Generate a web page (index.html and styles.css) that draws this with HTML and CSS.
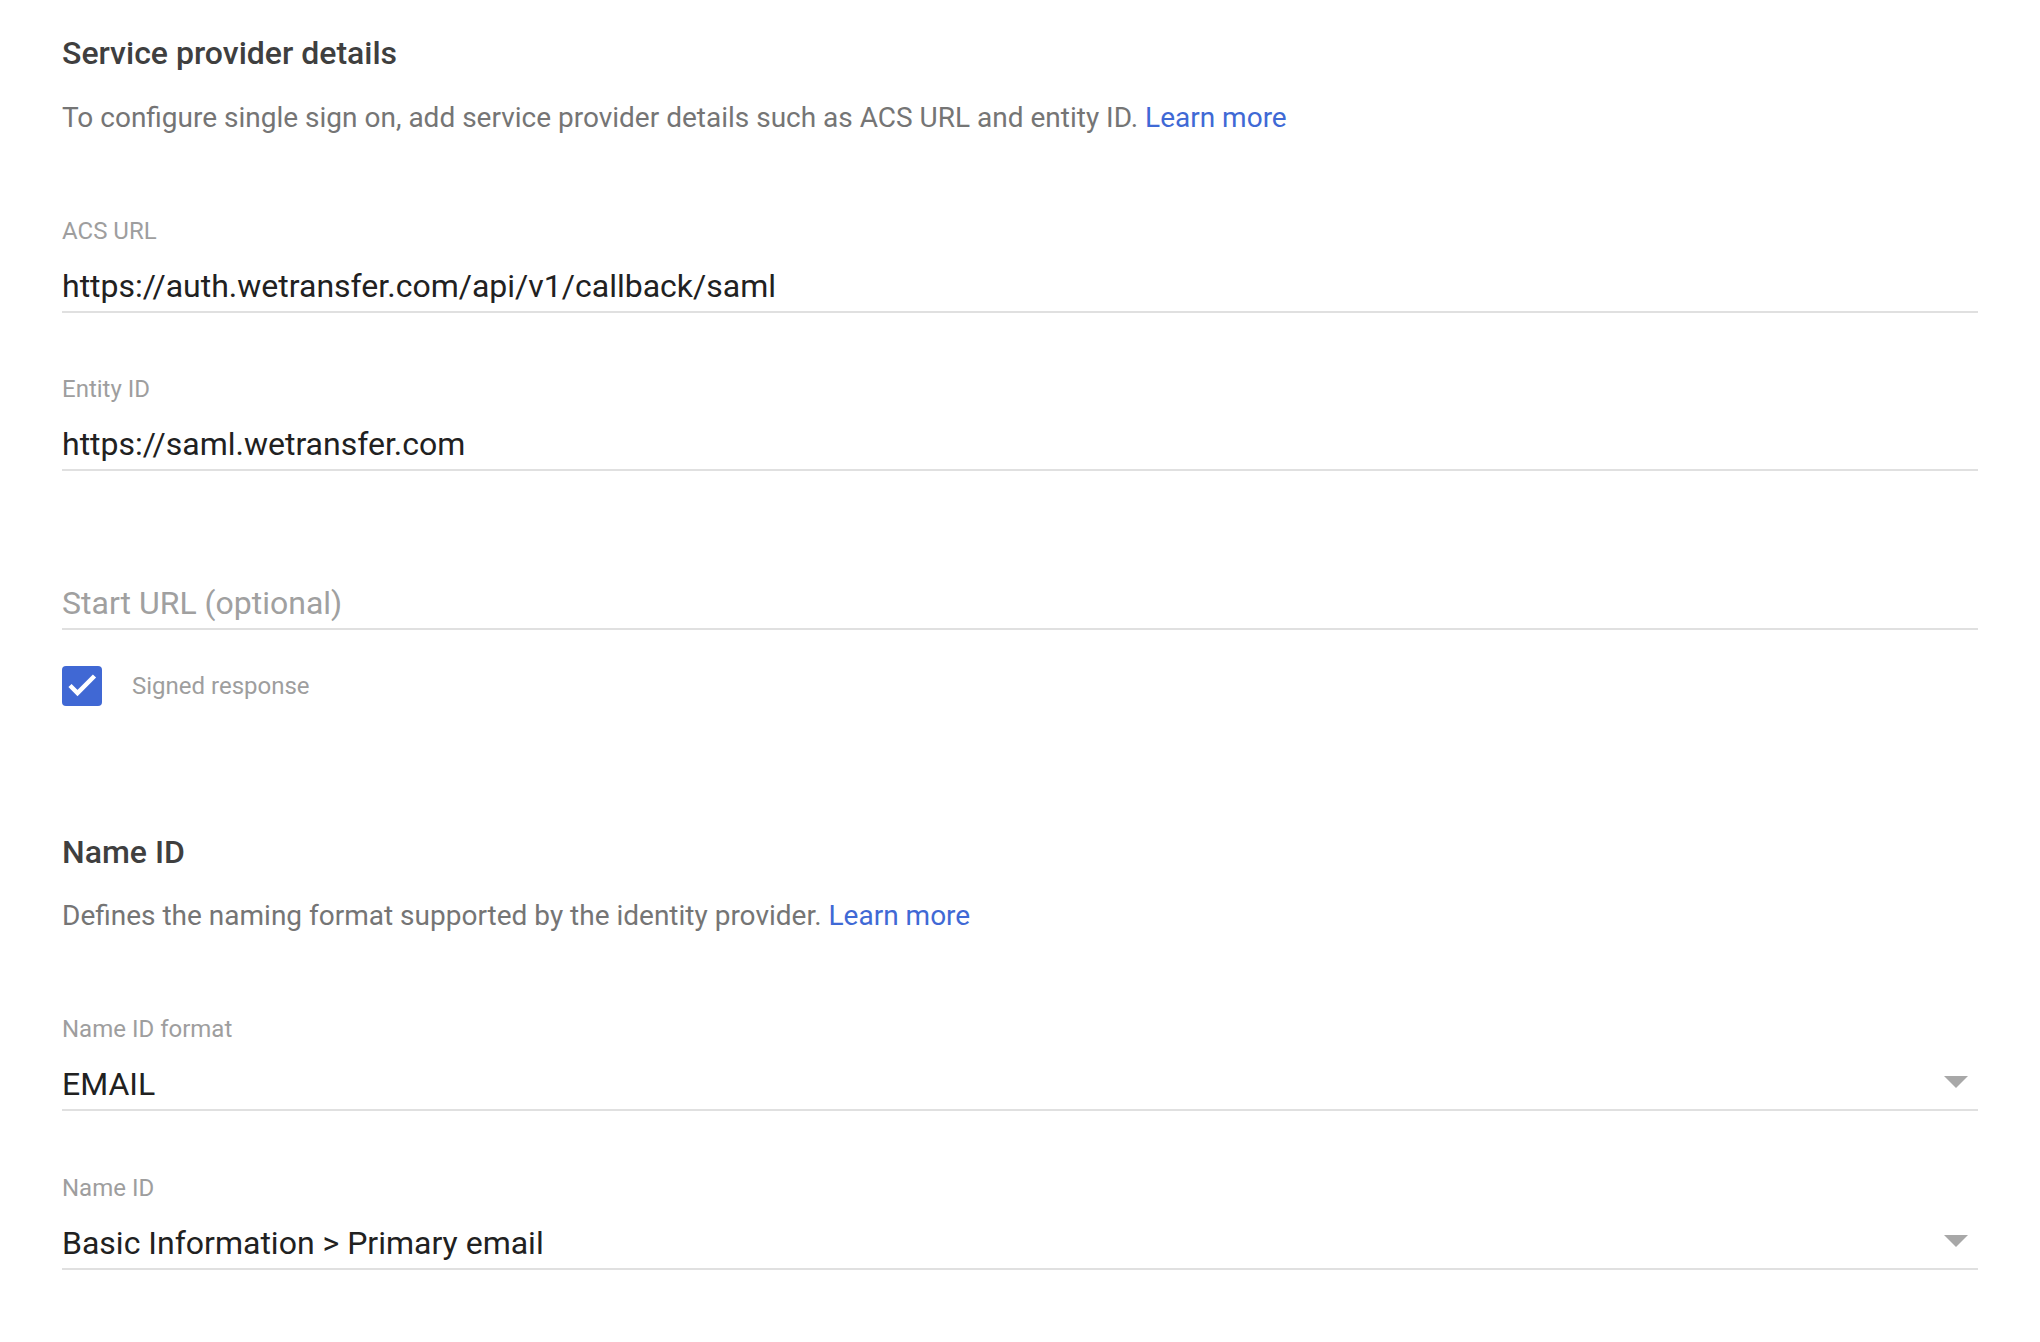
FILE: index.html
```html
<!DOCTYPE html>
<html lang="en">
<head>
<meta charset="utf-8">
<title>Service provider details</title>
<link rel="stylesheet" href="styles.css">
</head>
<body>
<main class="page">
  <section class="section">
    <h2 class="section-title">Service provider details</h2>
    <p class="section-desc">To configure single sign on, add service provider details such as ACS URL and entity ID. <a href="#" class="link">Learn more</a></p>
    <div class="fields">
      <div class="field">
        <div class="field-label">ACS URL</div>
        <div class="field-control"><span class="field-value">https://auth.wetransfer.com/api/v1/callback/saml</span></div>
      </div>
      <div class="field">
        <div class="field-label">Entity ID</div>
        <div class="field-control"><span class="field-value">https://saml.wetransfer.com</span></div>
      </div>
      <div class="field">
        <div class="field-label field-label-empty"></div>
        <div class="field-control"><span class="field-value placeholder">Start URL (optional)</span></div>
      </div>
    </div>
    <label class="checkbox-row">
      <span class="checkbox">
        <svg viewBox="0 0 40 40" width="40" height="40"><polyline points="8,19.5 15.5,27 32.5,10" fill="none" stroke="#ffffff" stroke-width="4.5"/></svg>
      </span>
      <span class="checkbox-text">Signed response</span>
    </label>
  </section>

  <section class="section section-second">
    <h2 class="section-title">Name ID</h2>
    <p class="section-desc">Defines the naming format supported by the identity provider. <a href="#" class="link">Learn more</a></p>
    <div class="fields">
      <div class="field">
        <div class="field-label">Name ID format</div>
        <div class="field-control"><span class="field-value">EMAIL</span><span class="dropdown-arrow"></span></div>
      </div>
      <div class="field">
        <div class="field-label">Name ID</div>
        <div class="field-control"><span class="field-value">Basic Information &gt; Primary email</span><span class="dropdown-arrow"></span></div>
      </div>
    </div>
  </section>
</main>
</body>
</html>
```

FILE: styles.css
```css
html, body {
  margin: 0;
  padding: 0;
  background: #ffffff;
}

body {
  font-family: Roboto, "Liberation Sans", Arial, sans-serif;
  color: #212121;
  -webkit-font-smoothing: antialiased;
}

.page {
  padding: 33px 62px 0;
}

.section {
  display: flex;
  flex-direction: column;
}

.section-second {
  margin-top: 126px;
}

.section-title {
  margin: 0;
  font-size: 32px;
  line-height: 40px;
  font-weight: 500;
  color: #3f3f3f;
}

.section-desc {
  margin: 24.5px 0 0;
  font-size: 28px;
  line-height: 40px;
  color: #757575;
}

.link {
  color: #3f69d5;
  text-decoration: none;
}

.fields {
  margin-top: 78px;
  display: flex;
  flex-direction: column;
  gap: 61.5px;
}

.field {
  display: flex;
  flex-direction: column;
}

.field-label {
  font-size: 24px;
  line-height: 30px;
  height: 30px;
  color: #9e9e9e;
  margin-bottom: 20px;
}

.field-control {
  display: flex;
  align-items: center;
  justify-content: space-between;
  padding-bottom: 5px;
  border-bottom: 2px solid #e0e0e0;
}

.field-value {
  font-size: 32px;
  line-height: 40px;
  color: #212121;
}

.field-value.placeholder {
  color: #a0a0a0;
}

.dropdown-arrow {
  width: 0;
  height: 0;
  border-left: 12px solid transparent;
  border-right: 12px solid transparent;
  border-top: 12px solid #a8a8a8;
  margin-right: 10px;
  margin-bottom: 4px;
}

.checkbox-row {
  margin-top: 36px;
  display: flex;
  align-items: center;
  gap: 30px;
}

.checkbox {
  width: 40px;
  height: 40px;
  border-radius: 4px;
  background: #4068d4;
  display: block;
}

.checkbox svg {
  display: block;
}

.checkbox-text {
  font-size: 24px;
  line-height: 40px;
  color: #9e9e9e;
}
```
